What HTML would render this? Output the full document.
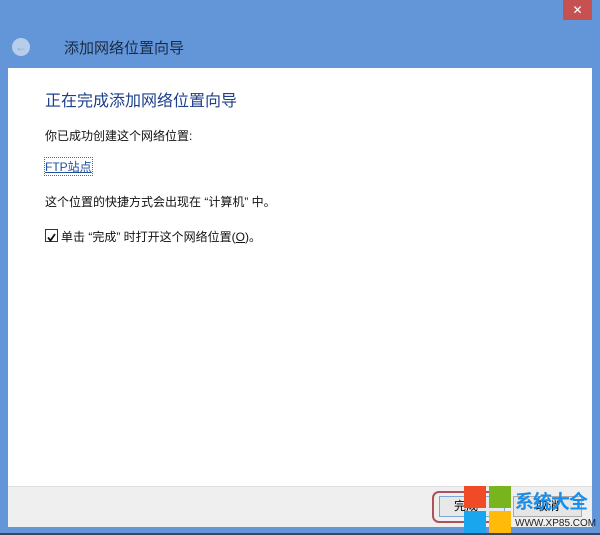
<!DOCTYPE html><html><head><meta charset="utf-8"><style>
body{margin:0;width:600px;height:535px;background:#6396d8;position:relative;overflow:hidden;font-family:"Liberation Sans","Noto Sans CJK SC",sans-serif}
.a{position:absolute}
</style></head><body>
<div class="a" style="left:0;top:533px;width:600px;height:2px;background:#3a4660"></div>
<div class="a" style="left:563px;top:0;width:29px;height:20px;background:#c75050;color:#fff;font-size:12px;text-align:center;line-height:20px">✕</div>
<div class="a" style="left:12px;top:38px;width:18px;height:18px;border-radius:50%;background:#b8cdea;color:#7fa6dc;font-size:12px;line-height:18px;text-align:center;font-weight:bold">←</div>
<div class="a" style="left:64px;top:37px;font-size:15px;color:#1a2a45">添加网络位置向导</div>
<div class="a" style="left:8px;top:68px;width:584px;height:418px;background:#fff"></div>
<div class="a" style="left:8px;top:486px;width:584px;height:40px;background:#efefef;border-top:1px solid #dfdfdf"></div>
<div class="a" style="left:45px;top:87px;font-size:16px;color:#1e3f8a">正在完成添加网络位置向导</div>
<div class="a" style="left:45px;top:127px;font-size:12px;color:#111">你已成功创建这个网络位置:</div>
<div class="a" style="left:45px;top:158px;font-size:12px;color:#1e4fa0;text-decoration:underline;outline:1px dotted #666">FTP站点</div>
<div class="a" style="left:45px;top:193px;font-size:12px;color:#111">这个位置的快捷方式会出现在 “计算机” 中。</div>
<div class="a" style="left:45px;top:229px;width:11px;height:11px;border:1px solid #333;background:#fff"><svg width="11" height="11"><path d="M2 5.5L4.5 8.5L9 2" stroke="#111" stroke-width="1.8" fill="none"/></svg></div>
<div class="a" style="left:61px;top:228px;font-size:12px;color:#111">单击 “完成” 时打开这个网络位置(<u>O</u>)。</div>
<div class="a" style="left:432px;top:491px;width:62px;height:28px;border:2px solid #b05058;border-radius:7px"></div>
<div class="a" style="left:439px;top:496px;width:50px;height:19px;border:1px solid #7aa8d8;background:#e8e8e8;font-size:12px;line-height:19px;padding-left:14px">完成</div>
<div class="a" style="left:513px;top:496px;width:67px;height:19px;border:1px solid #aaa;background:#e5e5e5;font-size:12px;line-height:19px;text-align:center">取消</div>
<div class="a" style="left:464px;top:486px;width:22px;height:22px;background:#f04a26"></div>
<div class="a" style="left:489px;top:486px;width:22px;height:22px;background:#78b41e"></div>
<div class="a" style="left:464px;top:511px;width:22px;height:22px;background:#1aa6ef"></div>
<div class="a" style="left:489px;top:511px;width:22px;height:22px;background:#ffba0a"></div>
<div class="a" style="left:515px;top:487px;font-size:19px;color:#1a8ee8;font-weight:bold;letter-spacing:-1px">系统大全</div>
<div class="a" style="left:515px;top:518px;font-size:10px;color:#222">WWW.XP85.COM</div>
</body></html>
